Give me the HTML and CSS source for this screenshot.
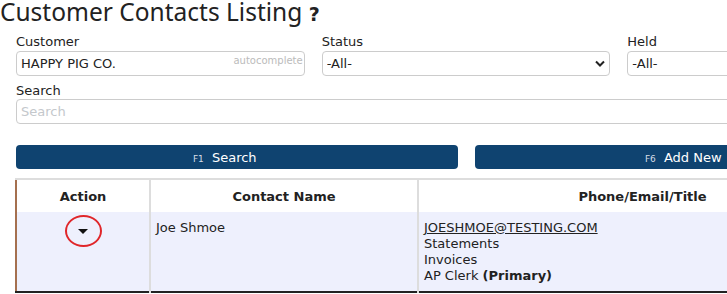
FILE: index.html
```html
<!DOCTYPE html>
<html lang="en">
<head>
    <meta charset="UTF-8">
    <meta name="viewport" content="width=device-width, initial-scale=1.0">
    <title>Customer Contacts Listing</title>
    <link rel="stylesheet" href="styles.css">
</head>
<body>
    <div class="page">
        <h1 class="page-title">Customer Contacts Listing <span class="help">?</span></h1>
        <div class="filters">
            <div class="field">
                <label>Customer</label>
                <div class="input-wrap">
                    <input type="text" value="HAPPY PIG CO.">
                    <span class="hint">autocomplete</span>
                </div>
            </div>
            <div class="field">
                <label>Status</label>
                <div class="select-wrap">
                    <select><option>-All-</option></select>
                    <svg class="chevron" width="10" height="7" viewBox="0 0 10 7"><path d="M1 1.5 L5 5.5 L9 1.5" fill="none" stroke="#222" stroke-width="2"/></svg>
                </div>
            </div>
            <div class="field">
                <label>Held</label>
                <div class="select-wrap">
                    <select><option>-All-</option></select>
                    <svg class="chevron" width="10" height="7" viewBox="0 0 10 7"><path d="M1 1.5 L5 5.5 L9 1.5" fill="none" stroke="#222" stroke-width="2"/></svg>
                </div>
            </div>
        </div>
        <div class="field search-field">
            <label>Search</label>
            <input type="text" placeholder="Search">
        </div>
        <div class="actions">
            <button class="btn"><span class="key">F1</span> Search</button>
            <button class="btn"><span class="key">F6</span> Add New</button>
        </div>
        <table class="grid">
            <thead>
                <tr>
                    <th class="col-action">Action</th>
                    <th class="col-name">Contact Name</th>
                    <th class="col-phone">Phone/Email/Title</th>
                </tr>
            </thead>
            <tbody>
                <tr>
                    <td class="cell-action"><span class="menu-toggle"><span class="caret"></span></span></td>
                    <td>Joe Shmoe</td>
                    <td>
                        <a href="#">JOESHMOE@TESTING.COM</a><br>
                        Statements<br>
                        Invoices<br>
                        AP Clerk <b>(Primary)</b>
                    </td>
                </tr>
            </tbody>
        </table>
    </div>
</body>
</html>
```

FILE: styles.css
```css
html, body {
    overflow: hidden;
}
body {
    margin: 0;
    font-family: "DejaVu Sans", Verdana, sans-serif;
    font-size: 13px;
    color: #222;
    background: #fff;
}
.page {
    width: 900px;
    padding-left: 16px;
}
.page-title {
    font-family: "Noto Sans", "Open Sans", sans-serif;
    font-weight: normal;
    font-size: 24.5px;
    line-height: 24px;
    margin: 0 0 0 -16px;
    color: #222;
}
.page-title .help {
    font-family: "DejaVu Sans", sans-serif;
    font-weight: bold;
    font-size: 19px;
    line-height: 0;
}
.filters {
    display: grid;
    grid-template-columns: repeat(3, 1fr);
    gap: 17px;
    margin-top: 9px;
}
.field label {
    display: block;
    line-height: 17px;
    margin-bottom: 1px;
}
.field input,
.field select {
    box-sizing: border-box;
    width: 100%;
    height: 25px;
    border: 1px solid #ccc;
    border-radius: 4px;
    padding: 0 4px;
    font-family: "DejaVu Sans", Verdana, sans-serif;
    font-size: 13px;
    color: #222;
    background: #fff;
    outline: none;
}
.field input::placeholder {
    color: #c4c8cc;
}
.input-wrap,
.select-wrap {
    position: relative;
}
.hint {
    position: absolute;
    right: 2px;
    top: 4px;
    font-size: 10px;
    color: #bbb;
}
.field select {
    appearance: none;
    padding-left: 4px;
}
.chevron {
    position: absolute;
    right: 5px;
    top: 9px;
}
.search-field {
    margin-top: 6px;
}
.search-field label {
    margin-bottom: 0;
}
.actions {
    display: grid;
    grid-template-columns: 1fr 1fr;
    gap: 17px;
    margin-top: 21px;
}
.btn {
    height: 24px;
    padding: 0 24px 0 0;
    border: none;
    border-radius: 4px;
    background: #0f4370;
    color: #fff;
    font-family: "DejaVu Sans", Verdana, sans-serif;
    font-size: 13px;
    font-weight: normal;
    cursor: pointer;
}
.btn .key {
    font-size: 9px;
    color: #d6dde6;
    margin-right: 4px;
}
.grid {
    margin-top: 9px;
    margin-left: -1px;
    width: 851px;
    border-collapse: collapse;
    border-top: 2px solid #ddd;
    border-left: 2px solid #a5704f;
    border-bottom: 2px solid #222;
}
.grid th {
    height: 32px;
    padding: 0 5px;
    font-weight: bold;
    text-align: center;
    background: #fff;
    border-left: 2px solid #ddd;
}
.grid th:first-child,
.grid td:first-child {
    border-left: none;
}
.col-action {
    width: 122px;
}
.col-name {
    width: 256px;
}
.grid td {
    height: 71px;
    vertical-align: top;
    padding: 8px 5px 0;
    line-height: 16px;
    background: #eef0fd;
    border-left: 2px solid #ddd;
}
.grid td a {
    color: #222;
}
.cell-action {
    text-align: center;
    padding-top: 3px !important;
}
.menu-toggle {
    display: inline-flex;
    align-items: center;
    justify-content: center;
    width: 33px;
    height: 28px;
    border: 2px solid #e0262a;
    border-radius: 50%;
}
.caret {
    width: 0;
    height: 0;
    border-left: 5px solid transparent;
    border-right: 5px solid transparent;
    border-top: 5px solid #111;
}
```
